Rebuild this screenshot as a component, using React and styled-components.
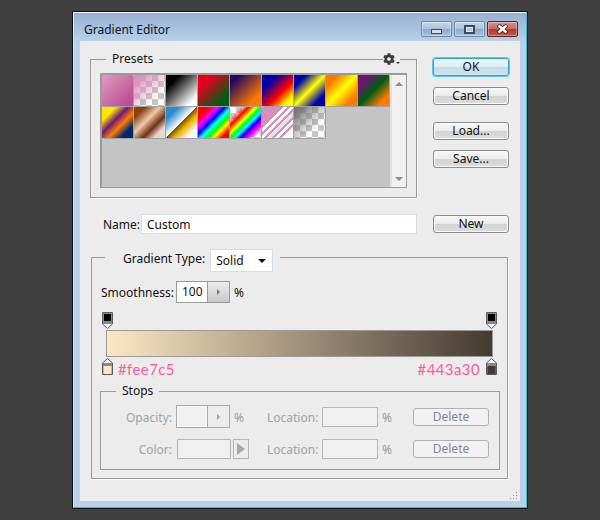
import React from 'react'
import styled, { createGlobalStyle } from 'styled-components'
import { FaCog } from 'react-icons/fa'

const Global = createGlobalStyle`
  html, body { margin: 0; padding: 0; background: #404040; }
  * { box-sizing: border-box; }
`

const CHECKER = 'repeating-conic-gradient(#c6c6c6 0 25%, #fff 0 50%) 0 0 / 12px 12px'

const PRESETS = [
  'linear-gradient(135deg,#e29cc2,#b5448c)',
  `linear-gradient(135deg,#dc8fbc 10%,rgba(220,143,188,0) 75%),${CHECKER}`,
  'linear-gradient(135deg,#000 22%,#fff 85%)',
  'linear-gradient(135deg,#e6001e 25%,#005c14 80%)',
  'linear-gradient(135deg,#25065f 15%,#ff7a00 80%)',
  'linear-gradient(135deg,#0000a8 25%,#f00 60%,#ff0 85%)',
  'linear-gradient(135deg,#0000a8 20%,#ff0 50%,#0000a8 80%)',
  'linear-gradient(135deg,#ff7a00 20%,#ff0 50%,#ff7a00 80%)',
  'linear-gradient(135deg,#6f1470 20%,#005c14 50%,#ff7a00 82%)',
  'linear-gradient(135deg,#ffe600 22%,#6f1a78 42%,#ff7a00 60%,#00286e 80%)',
  'linear-gradient(135deg,#8a4212 18%,#f2c8ac 42%,#6e3010 64%,#ecd8c8 82%)',
  'linear-gradient(135deg,#2a8ad0 20%,#fff 49%,#7a5000 50%,#e8b000 62%,#fff 85%)',
  'linear-gradient(135deg,#f00 18%,#f0f 32%,#00f 44%,#0ff 54%,#0f0 66%,#ff0 74%,#f00 88%)',
  `linear-gradient(135deg,rgba(255,0,0,0) 18%,#f00 30%,#ff0 42%,#0f0 50%,#0ff 58%,#00f 66%,#f0f 78%,rgba(255,0,255,0) 90%),${CHECKER}`,
  'linear-gradient(135deg,#d98fbb 34%,#fff 34% 41%,#d98fbb 41% 46%,#fff 46% 53%,#d98fbb 53% 58%,#e4e4e4 58% 65%,#d98fbb 65% 70%,#fff 70% 77%,#d98fbb 77% 82%,#fff 82%)',
  `linear-gradient(135deg,#777 10%,rgba(120,120,120,0) 70%),${CHECKER}`,
]

const Page = styled.div`
  width: 600px;
  height: 520px;
  padding: 12px 0 0 73px;
  background: #404040;
  font-family: "Noto Sans", Tahoma, sans-serif;
  font-size: 12px;
  color: #111;
`

const Window = styled.div`
  width: 454px;
  height: 496px;
  padding: 0 6px 6px;
  border: 1px solid #26c4dc;
  border-top-color: #f4f6f8;
  border-left-color: #dfe6ee;
  box-shadow: 0 0 0 1px #111;
  background: linear-gradient(180deg, #97b1d0 0, #b9d2ec 30px);
  display: flex;
  flex-direction: column;
`

const TitleBar = styled.div`
  height: 28px;
  flex: none;
  display: flex;
  align-items: flex-start;
  justify-content: space-between;
  padding: 8px 2px 0 4px;
`

const Title = styled.div`
  font-size: 12px;
  line-height: 18px;
  color: #10141c;
`

const Controls = styled.div`
  display: flex;
  gap: 2px;
`

const Control = styled.div`
  width: 31px;
  height: 16px;
  border: 1px solid ${p => (p.$close ? '#5c2420' : '#6f86a3')};
  border-radius: 2px;
  background: ${p =>
    p.$close
      ? 'linear-gradient(180deg,#dc958c 0,#c9665a 48%,#b03c30 52%,#c4574a 100%)'
      : 'linear-gradient(180deg,#c6d8ec 0,#a9c2dd 48%,#8eaacb 52%,#a8c2de 100%)'};
  box-shadow: inset 0 0 0 1px rgba(255, 255, 255, 0.35);
  display: flex;
  align-items: center;
  justify-content: center;
`

const MinIcon = styled.span`
  width: 11px;
  height: 5px;
  margin-top: 4px;
  background: #d8dde4;
  border: 1px solid #3c4a5c;
`

const MaxIcon = styled.span`
  width: 11px;
  height: 9px;
  border: 2px solid #3c4a5c;
  outline: 1px solid #dfe6ee;
  outline-offset: -3px;
  background: #b4c8de;
`

const Panel = styled.div`
  position: relative;
  width: 440px;
  height: 460px;
  flex: none;
  background: #ececec;
  padding: 10px 0 0 10px;
`

const TopRow = styled.div`
  display: flex;
  gap: 16px;
  height: 147px;
`

const Field = styled.fieldset`
  margin: 0;
  min-width: 0;
  border: 1px solid #9a9a9a;
  box-shadow: 1px 1px 0 #fff;
`

const PresetsBox = styled(Field)`
  position: relative;
  width: 327px;
  height: 147px;
  padding: 6px 9px 9px;
`

const Legend = styled.legend`
  height: 16px;
  line-height: 16px;
  padding: 0 6px;
  margin-left: 6px;
  font-size: 12px;
`

const GearWrap = styled.div`
  position: absolute;
  top: -15px;
  right: 16px;
  width: 17px;
  height: 14px;
  background: #ececec;
  display: flex;
  align-items: center;
  color: #3c3c3c;
  font-size: 12px;
  &::after {
    content: '';
    margin: 7px 0 0 1px;
    border: 2px solid transparent;
    border-top: 2px solid #333;
    border-bottom: 0;
  }
`

const PresetPanel = styled.div`
  display: flex;
  height: 115px;
  border: 1px solid #9a9a9a;
  border-width: 2px 1px 1px 2px;
  background: #c4c4c4;
`

const PresetGrid = styled.div`
  width: 288px;
  display: grid;
  grid-template-columns: repeat(9, 31px);
  grid-auto-rows: 31px;
  gap: 1px;
  align-content: start;
`

const Swatch = styled.div`
  background: ${p => p.$fill};
  box-shadow: 1px 1px 0 #a2a2a2;
`

const Scrollbar = styled.div`
  flex: 1;
  background: #f0f0f0;
  border-left: 2px solid #e2e2e2;
  display: flex;
  flex-direction: column;
  justify-content: space-between;
  align-items: center;
  padding: 7px 0 6px;
`

const ScrollArrow = styled.span`
  width: 0;
  height: 0;
  border: 4px solid transparent;
  ${p => (p.$down ? 'border-top: 4px solid #8c8c8c; border-bottom: 0;' : 'border-bottom: 4px solid #8c8c8c; border-top: 0;')}
`

const ButtonColumn = styled.div`
  width: 76px;
  display: flex;
  flex-direction: column;
  padding-top: 7px;
`

const Button = styled.div`
  width: 76px;
  height: 18px;
  margin-top: ${p => p.$top || 0}px;
  border: 1px solid ${p => (p.$primary ? '#2ba6dc' : '#8c8c8c')};
  border-radius: 3px;
  background: ${p =>
    p.$primary
      ? 'linear-gradient(180deg,#eef7fb 0,#dcedf4 48%,#c4dce6 52%,#cfe4ec 100%)'
      : 'linear-gradient(180deg,#f8f8f8 0,#ececec 48%,#d4d4d4 52%,#dcdcdc 100%)'};
  box-shadow: ${p => (p.$primary ? '0 0 0 1px #5cc4ec' : 'inset 0 0 0 1px #fafafa')};
  text-align: center;
  line-height: 15px;
  font-size: 12px;
`

const NameRow = styled.div`
  display: flex;
  align-items: center;
  margin-top: 16px;
  height: 20px;
  padding-left: 13px;
`

const NameLabel = styled.label`
  width: 38px;
`

const NameInput = styled.input`
  width: 276px;
  height: 20px;
  border: 1px solid #d4dce6;
  background: #fff;
  padding: 0 5px;
  font: inherit;
  color: #111;
  margin-right: 16px;
  outline: none;
`

const GradientBox = styled(Field)`
  width: 417px;
  margin: 15px 0 0 1px;
  padding: 16px 7px 8px 8px;
`

const GradientLegend = styled.legend`
  height: 16px;
  margin-left: 5px;
  padding: 0 7px 0 18px;
  display: flex;
  align-items: flex-start;
  gap: 5px;
  line-height: 20px;
`

const Dropdown = styled.div`
  width: 63px;
  height: 23px;
  flex: none;
  position: relative;
  z-index: 1;
  background: #fff;
  border: 1px solid #d4dce6;
  padding-left: 5px;
  line-height: 21px;
  display: flex;
  align-items: center;
  justify-content: space-between;
  &::after {
    content: '';
    margin-right: 6px;
    border: 4px solid transparent;
    border-top: 4px solid #111;
    border-bottom: 0;
  }
`

const SmoothRow = styled.div`
  display: flex;
  align-items: center;
  height: 22px;
  padding-left: 1px;
`

const SmoothLabel = styled.span`
  width: 75px;
`

const Spinner = styled.div`
  display: flex;
  width: 54px;
  height: ${p => (p.$disabled ? 23 : 22)}px;
  border: 1px solid ${p => (p.$disabled ? '#a8a8a8' : '#9a9a9a')};
  ${p => p.$disabled && 'margin-top: -1px;'}
`

const SpinnerValue = styled.div`
  flex: 1;
  background: ${p => (p.$disabled ? '#f0f0f0' : '#fff')};
  ${p => p.$disabled && 'border: 1px solid #fff;'}
  padding-left: 5px;
  line-height: 20px;
`

const SpinnerArrow = styled.div`
  width: 22px;
  border-left: 1px solid ${p => (p.$disabled ? '#a8a8a8' : '#9a9a9a')};
  background: ${p => (p.$disabled ? '#ececec' : 'linear-gradient(180deg,#ececec,#c8c8c8)')};
  display: flex;
  align-items: center;
  justify-content: center;
  &::after {
    content: '';
    border: 3px solid transparent;
    border-left: 3px solid ${p => (p.$disabled ? '#a0a0a0' : '#6a78a8')};
    border-right: 0;
  }
`

const Percent = styled.span`
  padding-left: 4px;
  color: ${p => (p.$disabled ? '#9a9a9a' : 'inherit')};
`

const MarkerRow = styled.div`
  display: flex;
  justify-content: space-between;
  margin: ${p => (p.$top ? '9px 3px 1px 2px' : '1px 3px 0 2px')};
  align-items: flex-start;
  height: 17px;
`

const Bar = styled.div`
  height: 27px;
  margin: 0 7px 0 6px;
  border: 1px solid #9a9a9a;
  background: linear-gradient(90deg, #fee7c5, #443a30);
`

const HexText = styled.span`
  flex: 1;
  padding: 3px 6px 0 5px;
  text-align: ${p => p.$align || 'left'};
  font-family: Lato, sans-serif;
  font-weight: 400;
  font-size: 15px;
  line-height: 17px;
  letter-spacing: 0.4px;
  color: #ff5a9e;
`

const StopsBox = styled(Field)`
  width: 400px;
  margin-top: 8px;
  padding: 7px 0 9px;
  box-shadow: none;
`

const StopsLegend = styled(Legend)`
  margin-left: 15px;
  padding: 0 6px;
`

const StopsGrid = styled.div`
  display: grid;
  grid-template-columns: 75px 54px 37px 55px 56px 35px 76px;
  grid-auto-rows: 22px;
  row-gap: 10px;
  align-items: center;
  color: #a2a2a2;
`

const StopLabel = styled.span`
  padding-right: ${p => (p.$left ? 0 : 4)}px;
  text-align: ${p => (p.$left ? 'left' : 'right')};
`

const Blank = styled.div`
  height: 20px;
  width: ${p => p.$width || 56}px;
  flex: none;
  border: 1px solid #b4b4b4;
  border-radius: 1px;
  background: #f0f0f0;
`

const ColorCell = styled.div`
  display: flex;
  gap: 2px;
  padding-left: 1px;
  white-space: nowrap;
`

const ColorArrow = styled.div`
  width: 16px;
  height: 20px;
  flex: none;
  border: 1px solid #b4b4b4;
  display: flex;
  align-items: center;
  justify-content: center;
  &::after {
    content: '';
    border: 6px solid transparent;
    border-left: 8px solid #a8a8a8;
    border-right: 0;
  }
`

const DeleteButton = styled.div`
  width: 76px;
  height: 18px;
  border: 1px solid #b0b0b0;
  border-radius: 3px;
  background: #f2f2f2;
  text-align: center;
  line-height: 16px;
  color: #85858f;
`

const Grip = styled.svg`
  position: absolute;
  right: 2px;
  bottom: 1px;
`

const StopMarker = ({ color, up }) => (
  <svg width="11" height="17" viewBox="0 0 11 17" style={{ display: 'block', flex: 'none', transform: up ? 'scaleY(-1)' : 'none' }}>
    <path d="M.5.5h10v11.5l-5 4.5-5-4.5z" fill="#f4f4f4" stroke="#5a5a5a" />
    <rect x="1" y="1" width="9" height="11" fill="#8a8a8a" />
    <rect x={up ? 1.5 : 2} y={up ? 1 : 2} width={up ? 8 : 7} height={up ? 8 : 7} fill={color} />
  </svg>
)

const App = () => (
  <Page>
    <Global />
    <Window>
      <TitleBar>
        <Title>Gradient Editor</Title>
        <Controls>
          <Control><MinIcon /></Control>
          <Control><MaxIcon /></Control>
          <Control $close>
            <svg width="13" height="10" viewBox="0 0 13 10">
              <path d="M2 1l9 8M11 1l-9 8" stroke="#40201c" strokeWidth="4" />
              <path d="M2.5 1.5l8 7M10.5 1.5l-8 7" stroke="#fff" strokeWidth="2.4" />
            </svg>
          </Control>
        </Controls>
      </TitleBar>
      <Panel>
        <TopRow>
          <PresetsBox>
            <Legend>Presets</Legend>
            <GearWrap><FaCog /></GearWrap>
            <PresetPanel>
              <PresetGrid>
                {PRESETS.map((fill, i) => <Swatch key={i} $fill={fill} />)}
              </PresetGrid>
              <Scrollbar>
                <ScrollArrow />
                <ScrollArrow $down />
              </Scrollbar>
            </PresetPanel>
          </PresetsBox>
          <ButtonColumn>
            <Button $primary>OK</Button>
            <Button $top={11}>Cancel</Button>
            <Button $top={17}>Load...</Button>
            <Button $top={10}>Save...</Button>
          </ButtonColumn>
        </TopRow>

        <NameRow>
          <NameLabel>Name:</NameLabel>
          <NameInput defaultValue="Custom" readOnly />
          <Button>New</Button>
        </NameRow>

        <GradientBox>
          <GradientLegend>
            Gradient Type:
            <Dropdown>Solid</Dropdown>
          </GradientLegend>
          <SmoothRow>
            <SmoothLabel>Smoothness:</SmoothLabel>
            <Spinner>
              <SpinnerValue>100</SpinnerValue>
              <SpinnerArrow />
            </Spinner>
            <Percent>%</Percent>
          </SmoothRow>
          <MarkerRow $top>
            <StopMarker color="#000" />
            <StopMarker color="#000" />
          </MarkerRow>
          <Bar />
          <MarkerRow>
            <StopMarker color="#fee7c5" up />
            <HexText>#fee7c5</HexText>
            <HexText $align="right">#443a30</HexText>
            <StopMarker color="#443a30" up />
          </MarkerRow>
          <StopsBox>
            <StopsLegend>Stops</StopsLegend>
            <StopsGrid>
              <StopLabel>Opacity:</StopLabel>
              <Spinner $disabled>
                <SpinnerValue $disabled />
                <SpinnerArrow $disabled />
              </Spinner>
              <Percent $disabled>%</Percent>
              <StopLabel $left>Location:</StopLabel>
              <Blank />
              <Percent $disabled>%</Percent>
              <DeleteButton>Delete</DeleteButton>

              <StopLabel>Color:</StopLabel>
              <ColorCell>
                <Blank $width={54} />
                <ColorArrow />
              </ColorCell>
              <span />
              <StopLabel $left>Location:</StopLabel>
              <Blank />
              <Percent $disabled>%</Percent>
              <DeleteButton>Delete</DeleteButton>
            </StopsGrid>
          </StopsBox>
        </GradientBox>
        <Grip width="9" height="9" viewBox="0 0 9 9">
          <path d="M7 1h1v1H7zM4 4h1v1H4zM7 4h1v1H7zM1 7h1v1H1zM4 7h1v1H4zM7 7h1v1H7z" fill="#9a9a9a" />
        </Grip>
      </Panel>
    </Window>
  </Page>
)

export default App
